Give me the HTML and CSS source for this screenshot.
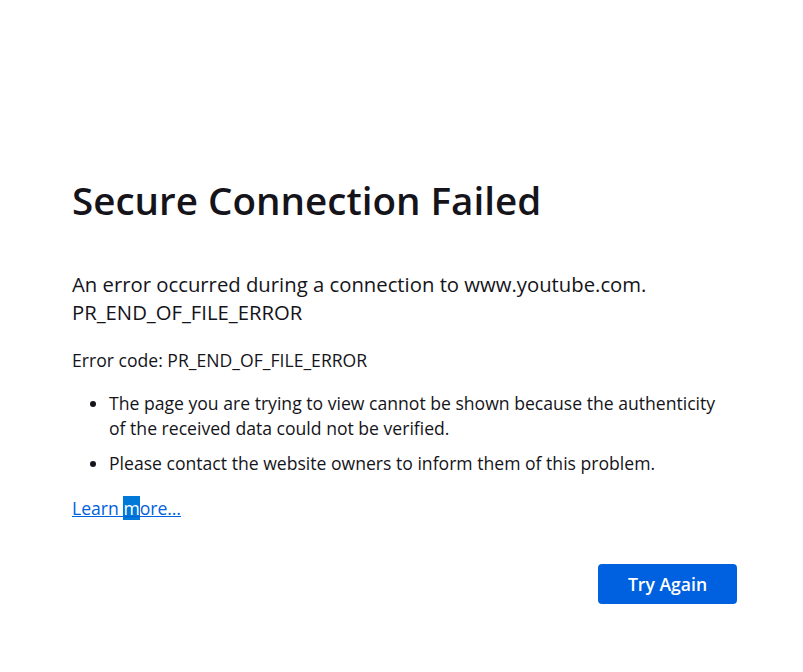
FILE: index.html
```html
<!DOCTYPE html>
<html lang="en">
<head>
  <meta charset="UTF-8" />
  <title>Problem loading page</title>
  <link rel="stylesheet" href="styles.css">
</head>
<body>
  <div class="container">
    <h1 class="title">Secure Connection Failed</h1>
    <p class="short-desc">An error occurred during a connection to www.youtube.com. PR_END_OF_FILE_ERROR</p>
    <p class="error-code">Error code: PR_END_OF_FILE_ERROR</p>
    <ul class="long-desc">
      <li>The page you are trying to view cannot be shown because the authenticity of the received data could not be verified.</li>
      <li>Please contact the website owners to inform them of this problem.</li>
    </ul>
    <p class="learn"><a href="#">Learn <span class="sel">m</span>ore…</a></p>
    <div class="buttons">
      <button class="primary">Try Again</button>
    </div>
  </div>
</body>
</html>
```

FILE: styles.css
```css
* {
  box-sizing: border-box;
}
body {
  margin: 0;
  background: #fff;
  color: #15141a;
  font-family: 'Open Sans', 'Noto Sans', sans-serif;
  font-size: 17.6px;
}
.container {
  width: 665px;
  margin: 0 0 0 72px;
  padding-top: 172px;
}
.title {
  margin: 0;
  font-size: 38.6px;
  font-weight: 600;
  line-height: 56px;
}
.short-desc {
  margin: 42px 0 0;
  font-size: 20.3px;
  line-height: 28px;
}
.error-code {
  margin: 22px 0 0;
  line-height: 25px;
}
.long-desc {
  margin: 18px 0 0;
  padding: 0 12px 0 37px;
  line-height: 25px;
}
.long-desc li {
  margin-bottom: 10px;
}
.learn {
  margin: 20px 0 0;
  line-height: 25px;
}
.learn a {
  color: #0061e0;
}
.learn .sel {
  background: #0078d7;
  color: #fff;
}
.buttons {
  display: flex;
  justify-content: flex-end;
  margin-top: 43px;
}
.primary {
  width: 139px;
  height: 40px;
  border: none;
  border-radius: 4px;
  background: #0061e0;
  color: #fff;
  font-family: inherit;
  font-size: 17.6px;
  font-weight: 600;
}
```
